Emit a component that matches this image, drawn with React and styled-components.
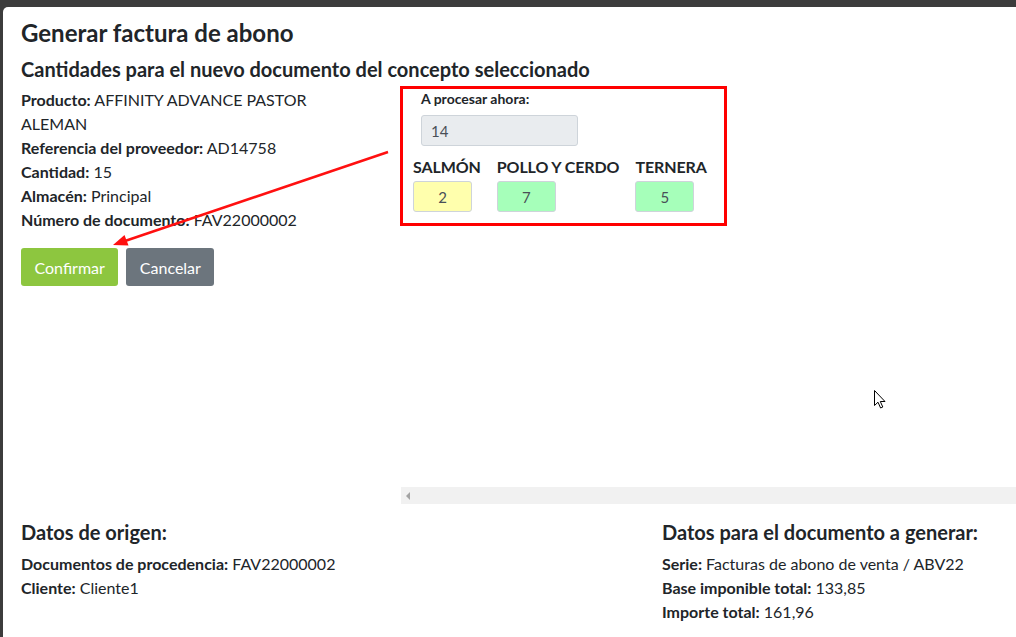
import React from "react";
import styled, { createGlobalStyle } from "styled-components";

const Global = createGlobalStyle`
  html, body { margin: 0; padding: 0; }
  body {
    background: #3c3c3c;
    font-family: Lato, "Open Sans", sans-serif;
    color: #212529;
    overflow: hidden;
  }
`;

const Page = styled.div`
  position: relative;
  width: 1016px;
  height: 637px;
  overflow: hidden;
`;

const Modal = styled.div`
  margin: 7px 0 0 3px;
  height: 630px;
  background: #fff;
  border-radius: 5px 0 0 0;
  padding: 11px 0 0 18px;
  box-sizing: border-box;
  display: flex;
  flex-direction: column;
`;

const Title = styled.h1`
  margin: 0 0 10px;
  font-size: 24px;
  line-height: 29px;
  font-weight: 700;
`;

const Subtitle = styled.h2`
  margin: 0 0 7px;
  font-size: 20px;
  line-height: 24px;
  font-weight: 700;
`;

const TopGrid = styled.div`
  display: grid;
  grid-template-columns: 379px 1fr;
`;

const Details = styled.div`
  max-width: 330px;
`;

const Line = styled.div`
  font-size: 16px;
  line-height: 24px;
  b { font-weight: 700; }
`;

const Buttons = styled.div`
  display: flex;
  gap: 8px;
  margin-top: 16px;
`;

const Button = styled.button`
  height: 38px;
  padding: 0 13.5px;
  border: none;
  border-radius: 3px;
  font-family: Lato, sans-serif;
  font-size: 16px;
  color: #fff;
  background: ${(p) => (p.$variant === "primary" ? "#8dc63f" : "#6c757d")};
`;

const RightCol = styled.div`
  display: flex;
  flex-direction: column;
`;

const RedBox = styled.div`
  width: 327px;
  box-sizing: border-box;
  margin-top: -2px;
  border: 3px solid #ff0000;
  padding: 0 10px 11px;
`;

const ProcessGroup = styled.div`
  padding-left: 8px;
`;

const SmallLabel = styled.div`
  font-size: 14px;
  line-height: 20px;
  font-weight: 700;
`;

const Field = styled.div`
  box-sizing: border-box;
  width: ${(p) => p.$w}px;
  height: 31px;
  margin-top: ${(p) => p.$mt || 0}px;
  border: 1px solid #ced4da;
  border-radius: 3px;
  background: ${(p) => p.$bg};
  color: #495057;
  font-size: 15px;
  display: flex;
  align-items: center;
  justify-content: ${(p) => (p.$center ? "center" : "flex-start")};
  padding: 0 9px;
`;

const Species = styled.div`
  display: flex;
  gap: 16px;
  margin-top: 10px;
`;

const SpeciesItem = styled.div`
  display: flex;
  flex-direction: column;
`;

const SpeciesLabel = styled.div`
  font-size: 16px;
  line-height: 22px;
  font-weight: 700;
  white-space: nowrap;
  margin-bottom: 3px;
  letter-spacing: -0.1px;
`;

const Viewport = styled.div`
  height: 261px;
`;

const Track = styled.div`
  height: 17px;
  background: #f1f1f1;
  display: flex;
  align-items: center;
  padding-left: 5px;
  margin-left: 1px;
`;

const BottomGrid = styled.div`
  display: grid;
  grid-template-columns: 641px 1fr;
  margin-top: 16px;
`;

const SectionTitle = styled.h3`
  margin: 0 0 8px;
  font-size: 20px;
  line-height: 24px;
  font-weight: 700;
`;

const Overlay = styled.svg`
  position: absolute;
  left: 0;
  top: 0;
  pointer-events: none;
`;

const Cursor = styled.svg`
  position: absolute;
  left: 874px;
  top: 390px;
`;

const Row = ({ k, v }) => (
  <Line>
    <b>{k}:</b> {v}
  </Line>
);

const species = [
  { name: "SALMÓN", value: 2, bg: "#ffffad" },
  { name: "POLLO Y CERDO", value: 7, bg: "#a6ffba" },
  { name: "TERNERA", value: 5, bg: "#a6ffba" },
];

export default function App() {
  return (
    <Page>
      <Global />
      <Modal>
        <Title>Generar factura de abono</Title>
        <Subtitle>Cantidades para el nuevo documento del concepto seleccionado</Subtitle>
        <TopGrid>
          <Details>
            <Row k="Producto" v="AFFINITY ADVANCE PASTOR ALEMAN" />
            <Row k="Referencia del proveedor" v="AD14758" />
            <Row k="Cantidad" v="15" />
            <Row k="Almacén" v="Principal" />
            <Row k="Número de documento" v="FAV22000002" />
            <Buttons>
              <Button $variant="primary">Confirmar</Button>
              <Button>Cancelar</Button>
            </Buttons>
          </Details>
          <RightCol>
            <RedBox>
              <ProcessGroup>
                <SmallLabel>A procesar ahora:</SmallLabel>
                <Field $w={157} $mt={6} $bg="#e9ecef">14</Field>
              </ProcessGroup>
              <Species>
                {species.map((s) => (
                  <SpeciesItem key={s.name}>
                    <SpeciesLabel>{s.name}</SpeciesLabel>
                    <Field $w={59} $bg={s.bg} $center>
                      {s.value}
                    </Field>
                  </SpeciesItem>
                ))}
              </Species>
            </RedBox>
            <Viewport />
            <Track>
              <svg width="5" height="8" viewBox="0 0 5 8">
                <path d="M4 0 L0 4 L4 8 Z" fill="#a3a3a3" />
              </svg>
            </Track>
          </RightCol>
        </TopGrid>
        <BottomGrid>
          <div>
            <SectionTitle>Datos de origen:</SectionTitle>
            <Row k="Documentos de procedencia" v="FAV22000002" />
            <Row k="Cliente" v="Cliente1" />
          </div>
          <div>
            <SectionTitle>Datos para el documento a generar:</SectionTitle>
            <Row k="Serie" v="Facturas de abono de venta / ABV22" />
            <Row k="Base imponible total" v="133,85" />
            <Row k="Importe total" v="161,96" />
          </div>
        </BottomGrid>
      </Modal>
      <Overlay width="1016" height="637" viewBox="0 0 1016 637">
        <line x1="388" y1="152" x2="125" y2="241" stroke="#ff1010" strokeWidth="2.5" />
        <polygon points="113,245 128.5,245.5 124.5,235" fill="#ff1010" />
      </Overlay>
      <Cursor width="13" height="20" viewBox="0 0 13 20">
        <path
          d="M0.5 0.5 L0.5 15.5 L4 12.2 L6.6 18 L8.8 17 L6.3 11.5 L11 11.5 Z"
          fill="#fff"
          stroke="#000"
          strokeWidth="1"
          strokeLinejoin="miter"
        />
      </Cursor>
    </Page>
  );
}
